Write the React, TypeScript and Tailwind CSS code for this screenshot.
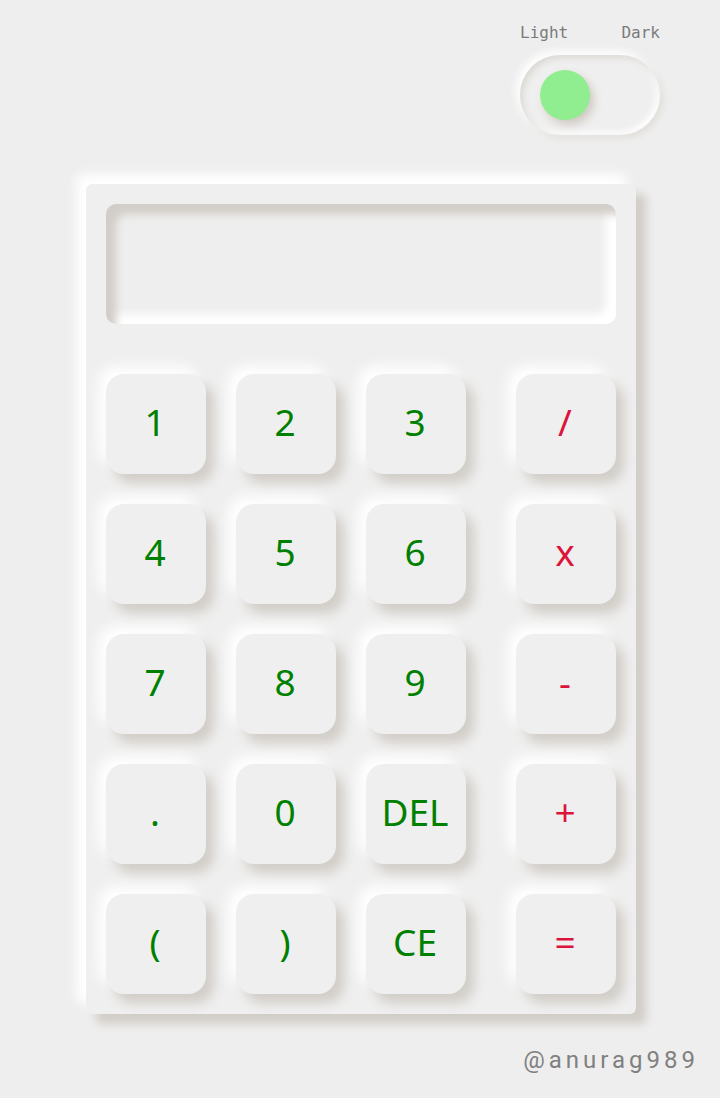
import React, { useState } from "react";

const rows = [
  ["1", "2", "3", "/"],
  ["4", "5", "6", "x"],
  ["7", "8", "9", "-"],
  [".", "0", "DEL", "+"],
  ["(", ")", "CE", "="],
];

function Key({ label, op }: { label: string; op?: boolean }) {
  return (
    <button
      className={`${
        op ? "text-[#dc143c]" : "text-[#008000]"
      } w-[100px] h-[100px] rounded-[18px] bg-[#efefef] flex items-center justify-center pb-[5px] pr-[2px] text-[37px] leading-none font-['Noto_Sans',sans-serif] shadow-[8px_9px_12px_#d1cdc7,-8px_-8px_14px_#ffffff]`}
    >
      {label}
    </button>
  );
}

export default function App() {
  const [dark, setDark] = useState(false);

  return (
    <div className="min-h-screen w-full bg-[#eeeeee] flex flex-col pt-[23px] pb-[20px]">
      {/* theme toggle */}
      <div className="flex justify-end pr-[60px]">
        <div className="w-[140px] flex flex-col">
          <div className="flex justify-between text-[16px] leading-[20px] text-[#7a7a7a] font-['DejaVu_Sans_Mono',monospace]">
            <span>Light</span>
            <span>Dark</span>
          </div>
          <button
            onClick={() => setDark(!dark)}
            className="mt-[12px] w-[140px] h-[80px] rounded-full bg-[#efefef] flex items-center pl-[20px] shadow-[inset_3px_3px_6px_#dcd9d4,inset_-3px_-3px_6px_#ffffff,-4px_-4px_8px_#ffffff,3px_3px_6px_#e0ddd8]"
          >
            <span className="block w-[50px] h-[50px] rounded-full bg-[#90ee90] shadow-[4px_5px_8px_#cfcac3]"></span>
          </button>
        </div>
      </div>

      {/* calculator */}
      <div className="ml-[86px] mt-[49px] w-[550px] h-[830px] bg-[#efefef] rounded-[6px] p-[20px] flex flex-col shadow-[10px_10px_10px_#d1cdc7,-10px_-10px_12px_#ffffff]">
        <div className="h-[120px] w-[510px] rounded-[10px] bg-[#eeeeee] shadow-[inset_10px_10px_8px_#d1cdc7,inset_-10px_-10px_8px_#ffffff]"></div>
        <div className="mt-[50px] flex flex-col gap-[30px]">
          {rows.map((row, i) => (
            <div key={i} className="flex">
              <div className="flex gap-[30px]">
                {row.slice(0, 3).map((k) => (
                  <Key key={k} label={k} />
                ))}
              </div>
              <div className="ml-[50px]">
                <Key label={row[3]} op />
              </div>
            </div>
          ))}
        </div>
      </div>

      {/* signature */}
      <div className="mt-[30px] flex justify-end pr-[21px]">
        <span className="text-[24px] leading-[32px] tracking-[4px] text-[#808080] font-['Roboto',sans-serif]">
          @anurag989
        </span>
      </div>
    </div>
  );
}
